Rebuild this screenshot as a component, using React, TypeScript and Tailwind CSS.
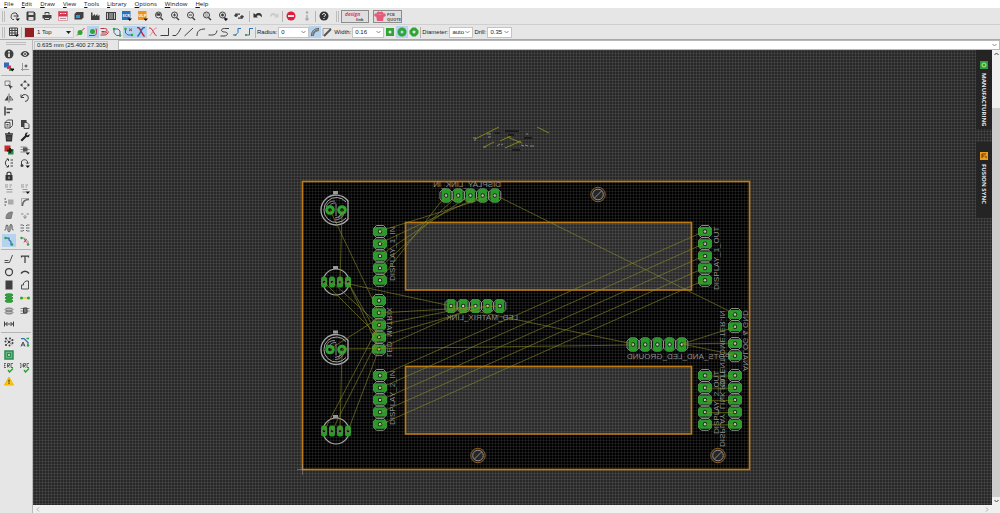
import type { ReactNode } from "react"
import { clsx } from "clsx"

const DARK = "#404040"
const GREEN = "#2fa535"
const BLUE = "#2a6fb5"

const menus = ["File", "Edit", "Draw", "View", "Tools", "Library", "Options", "Window", "Help"]

const lens = (inner: ReactNode) => (
  <>
    <circle cx="9" cy="8" r="6" />
    <path d="M13 13l5 5" strokeWidth="3" />
    {inner}
  </>
)

const drop = <path d="M11 15h9l-4.500 5z" fill="#111" stroke="none" />

const badge = (color: string, text: string) => (
  <>
    <rect x="0" y="0" width="17" height="18" fill={color} stroke="none" />
    <text x="8.5" y="11" fontSize="8" fontWeight="bold" textAnchor="middle" fill="#fff" stroke="none">
      {text}
    </text>
    {drop}
  </>
)

// every glyph is drawn on a 20 x 20 grid
const glyphs: Record<string, ReactNode> = {
  open: (
    <>
      <path d="M8 17H5c-5-3-3-13 3-13h4l3 3M7 10h9M13 7l4 3-4 3" />
      {drop}
    </>
  ),
  save: (
    <>
      <path d="M2 2h14l2 2v14H2z" fill={DARK} />
      <path d="M5 3h10v5H5zM5 12h10v6H5z" fill="#ddd" stroke="none" />
    </>
  ),
  print: (
    <>
      <path d="M1 8h18v7H1z" fill={DARK} stroke="none" />
      <path d="M6 7V3h8v4M5 13h10v4H5z" fill="#ddd" />
    </>
  ),
  cam: (
    <>
      <rect x="1" y="1" width="18" height="18" fill="#eee" stroke="#e08090" strokeWidth="1.500" />
      <rect x="1" y="1" width="18" height="10" fill="#d8344c" stroke="none" />
      <path d="M4 5h3M9 5h2M13 5h3" stroke="#fff" />
      <path d="M4 15h12" stroke="#999" />
    </>
  ),
  board: (
    <>
      <path d="M5 2h14v11l-4 4H1V6z" fill={DARK} stroke="none" />
      <rect x="4" y="8" width="8" height="6" fill="#3597d8" stroke="none" />
    </>
  ),
  factory: <path d="M2 18V3h3v7l5-4v4l5-4v4l4-2v10z" fill={DARK} stroke="none" />,
  library: (
    <>
      <path d="M0 2h20v16H0z" fill={DARK} stroke="none" />
      <path d="M3 4v12M8 4v12M12 4v12M17 4v12" stroke="#c8c8c8" />
    </>
  ),
  scr: badge("#2474bd", "SCR"),
  ulp: badge("#f2921d", "ULP"),
  zoomFit: lens(<path d="M5 8h8M5 6h8" strokeWidth="3" />),
  zoomIn: lens(<path d="M6 8h6M9 5v6" />),
  zoomOut: lens(<path d="M6 8h6" />),
  zoomRedraw: lens(<path d="M6 6h6M6 10h6" stroke="#888" />),
  zoomSelect: (
    <>
      {lens(<path d="M6 8h6M9 5v6" strokeWidth="3" />)}
      {drop}
    </>
  ),
  refresh: <path d="M4 12V6h8M1 10l3-4 3 4M16 8v6H8M13 10l3 4 3-4" strokeWidth="2.500" />,
  undo: <path d="M1 4v9h9L7 10c4-3 8-2 10 3 3-8-5-12-12-6z" fill="#333" stroke="none" />,
  redo: <path d="M19 4v9h-9l3-3c-4-3-8-2-10 3-3-8 5-12 12-6z" fill="#ccc" stroke="none" />,
  stop: (
    <>
      <circle cx="10" cy="10" r="9" fill="#e01b3c" stroke="none" />
      <path d="M4 10h12" stroke="#fff" strokeWidth="3.500" />
    </>
  ),
  go: (
    <g fill="#aaa" stroke="none">
      <circle cx="10" cy="3" r="2.500" />
      <circle cx="10" cy="10" r="2" />
      <circle cx="10" cy="16" r="3.500" />
    </g>
  ),
  help: (
    <>
      <circle cx="10" cy="10" r="9" fill="#333" stroke="none" />
      <path d="M7 8c0-4 6-4 6 0 0 2-3 2-3 4M10 14v2" stroke="#fff" />
    </>
  ),
  grid: (
    <>
      <path d="M1 2h16v15H1zM1 7h16M1 12h16M6 2v15M12 2v15" />
      {drop}
    </>
  ),
  ignore: (
    <>
      <path d="M2 17L17 2" stroke="#d03030" />
      <circle cx="8" cy="11" r="5" fill={GREEN} stroke="none" />
    </>
  ),
  walk: (
    <>
      <path d="M2 17h10c5 0 6-6 4-14" stroke="#b83040" />
      <circle cx="9" cy="9" r="5" fill={GREEN} stroke="none" />
    </>
  ),
  push: <path d="M1 3h8c7 0 7 6 0 6H3M1 16h7c5 0 8-3 9-7M3 12h6c4 0 5-2 5-3" stroke="#b83040" />,
  loop: (
    <>
      <path d="M4 4h8l4 4v9H9l-5-6z" stroke={BLUE} />
      <circle cx="4" cy="4" r="2.500" fill={GREEN} stroke="none" />
      <circle cx="16" cy="17" r="2.500" fill={GREEN} stroke="none" />
    </>
  ),
  loopOff: (
    <>
      <path d="M3 3v9l5 4h8" stroke={BLUE} />
      <circle cx="3" cy="4" r="2.500" fill={GREEN} stroke="none" />
      <circle cx="16" cy="16" r="2.500" fill={GREEN} stroke="none" />
      <path d="M10 3l6 5M16 3l-6 5" stroke="#d03050" />
    </>
  ),
  shove: (
    <>
      <path d="M2 1h3c6 5 6 13 12 18" stroke="#d02040" strokeWidth="3" />
      <path d="M18 1h-3C9 6 9 14 3 19" stroke={BLUE} strokeWidth="3" />
    </>
  ),
  shoveOff: (
    <>
      <path d="M2 2h3c6 5 6 11 12 16" stroke="#d02040" />
      <path d="M18 2h-3C9 7 9 13 3 18" stroke="#e0909c" />
    </>
  ),
  bend0: <path d="M1 17h16V2" />,
  bend1: <path d="M1 17h7l5-6 5-9" />,
  bend2: <path d="M1 18L18 2" />,
  bend3: <path d="M2 18c0-10 5-14 16-14" />,
  bend4: <path d="M1 16h8c5 0 8-3 9-9" />,
  bend5: <path d="M18 3H9c-8 0-8 7 0 7s8 8-1 8H1" />,
  bend6: (
    <>
      <path d="M2 16h5l5-5V3h6" stroke={BLUE} />
      <circle cx="7" cy="16" r="2" fill={GREEN} stroke="none" />
    </>
  ),
  bend7: (
    <>
      <path d="M2 16h9V3h7" stroke={BLUE} />
      <circle cx="4" cy="16" r="2" fill={GREEN} stroke="none" />
    </>
  ),
  miterRound: (
    <>
      <path d="M3 18C3 8 8 3 18 3" stroke="#555" />
      <path d="M6 18C6 11 10 7 18 6" stroke="#777" strokeWidth="4" />
    </>
  ),
  miterFlat: (
    <>
      <path d="M2 18V3h16" stroke="#888" strokeWidth="1.500" />
      <path d="M4 18L18 4" stroke="#555" strokeWidth="4" />
    </>
  ),
  viaSquare: (
    <>
      <rect x="2" y="2" width="16" height="16" fill={GREEN} stroke="none" />
      <circle cx="10" cy="10" r="3" fill="#e6e6e6" stroke="none" />
    </>
  ),
  viaRound: <circle cx="10" cy="10" r="6" stroke={GREEN} strokeWidth="6" />,
  viaOctagon: <path d="M8 4h4l4 4v4l-4 4H8l-4-4V8z" stroke={GREEN} strokeWidth="6" />,
  info: (
    <>
      <circle cx="10" cy="10" r="9" fill={DARK} stroke="none" />
      <path d="M10 4v3M10 9v7" stroke="#fff" strokeWidth="3" />
    </>
  ),
  show: (
    <>
      <path d="M1 10c5-8 13-8 18 0-5 8-13 8-18 0z" fill={DARK} stroke="none" />
      <circle cx="10" cy="10" r="3" stroke="#ddd" />
    </>
  ),
  layers: (
    <g stroke="none">
      <rect x="0" y="1" width="10" height="10" fill={BLUE} />
      <rect x="6" y="7" width="8" height="7" fill="#d83060" />
      <rect x="10" y="13" width="6" height="5" fill={GREEN} />
      <path d="M12 13h9l-4 6z" fill="#111" />
    </g>
  ),
  mark: (
    <>
      <path d="M5 2v16M2 15h16" stroke="#999" />
      <path d="M12 5v6M9 8h6" />
    </>
  ),
  group: (
    <>
      <path d="M2 2h10v9H2z" strokeWidth="1.500" stroke="#666" />
      <path d="M8 8l10 6-4 1-1 4z" fill={DARK} stroke="none" />
    </>
  ),
  move: (
    <g fill={DARK} stroke="none">
      <path d="M10 0l4 5H6zM10 20l4-5H6zM0 10l5-4v8zM20 10l-5-4v8z" />
    </g>
  ),
  mirror: (
    <>
      <path d="M10 1v18" strokeWidth="1.500" />
      <path d="M8 5v10H1z" fill={DARK} stroke="none" />
      <path d="M12 6v8h6z" strokeWidth="1.500" />
    </>
  ),
  rotate: <path d="M3 8a7 7 0 1 1 7 9M2 3v6h6" />,
  align: <path d="M2 1v18M5 6h12M5 13h7" strokeWidth="3" />,
  copy: <path d="M2 7h10v11H2zM2 7l5-5h10v11l-5 5M5 11h4M5 14h4" strokeWidth="1.800" />,
  paste: (
    <>
      <path d="M2 2h11v14H2z" fill={DARK} stroke="none" />
      <path d="M8 7h6l4 4v8H8z" fill="#ddd" strokeWidth="1.800" />
    </>
  ),
  trash: (
    <>
      <path d="M3 6h14l-1 13H4z" fill="#333" stroke="none" />
      <path d="M2 4h16M8 2h4" stroke="#333" strokeWidth="3" />
      <path d="M8 9v7M12 9v7" stroke="#999" strokeWidth="1" />
    </>
  ),
  wrench: <path d="M1 16L10 7c-1-4 2-7 6-6l-3 4 2 2 4-3c1 5-2 7-6 6l-9 9z" fill="#222" stroke="none" />,
  add: (
    <g stroke="none">
      <rect x="1" y="1" width="12" height="12" fill="#c92a2a" />
      <rect x="8" y="8" width="11" height="11" fill="#248a3d" />
      <path d="M6 9h4V6h4v3h3v4h-3v3h-4v-3H6z" fill="#222" />
    </g>
  ),
  replace: (
    <>
      <path d="M1 4h12M1 9h18M1 14h10" stroke="#888" />
      <rect x="6" y="5" width="9" height="8" fill="#555" stroke="none" />
      {drop}
    </>
  ),
  pinswap: <path d="M8 2C1 6 1 14 8 18M5 2h4v4M5 18h4v-4M13 4h5M13 10h5M13 16h5" />,
  gateswap: (
    <>
      <path d="M3 14V8c0-6 12-6 12 0v2M12 9l3 3 3-3" />
      <circle cx="4" cy="15" r="3" fill={DARK} stroke="none" />
      {drop}
    </>
  ),
  lock: (
    <>
      <rect x="3" y="8" width="14" height="11" fill="#333" stroke="none" />
      <path d="M6 9V5c0-4 8-4 8 0v4" strokeWidth="2.500" />
      <path d="M10 11v5" stroke="#ccc" />
    </>
  ),
  name: <path d="M2 2h6M11 2h5M2 6h6M11 6h3M5 11h12M5 16h12" stroke="#999" />,
  value: (
    <>
      <path d="M2 2h6M11 2h5M2 6h6M11 6h3M5 11h10M5 16h6" stroke="#999" />
      {drop}
    </>
  ),
  smash: (
    <>
      <rect x="8" y="5" width="11" height="10" fill="#aaa" stroke="none" />
      <path d="M1 4h3M1 10h5M1 16h3" />
    </>
  ),
  miter: (
    <>
      <path d="M3 18V3h15" stroke="#aaa" />
      <path d="M5 18C5 10 9 5 18 5" stroke="#666" strokeWidth="3" />
    </>
  ),
  split: <path d="M4 17C4 8 8 4 17 4l-3 13z" fill="#888" stroke="#777" />,
  optimize: <path d="M2 8h5M13 8h5M7 13l3 4 3-4M10 10v6" stroke="#888" />,
  meander: <path d="M1 14c3 0 3-1 3-5 0-7 4-7 4 0v5c0 5 4 5 4 0V8c0-7 4-7 4 0 0 4 0 6 3 6" />,
  fanout: <path d="M1 4h5l2 2M1 10h7M1 16h5l2-2M19 4h-5l-2 2M19 10h-7M19 16h-5l-2-2" stroke="#666" />,
  route: (
    <>
      <path d="M3 4h7v4l4 3v6h4" stroke={BLUE} strokeWidth="2.500" />
      <circle cx="3" cy="4" r="2.500" fill={GREEN} stroke="none" />
      <circle cx="16" cy="17" r="2.500" fill={GREEN} stroke="none" />
    </>
  ),
  ripup: (
    <>
      <path d="M3 4h6l7 7v6" stroke="#888" />
      <circle cx="3" cy="4" r="2.500" fill={GREEN} stroke="none" />
      <circle cx="16" cy="17" r="2.500" fill={GREEN} stroke="none" />
      <path d="M8 6l5 7M13 6l-5 7" stroke="#d83050" />
    </>
  ),
  line: <path d="M1 17h10l6-15M1 13h8" strokeWidth="1.800" />,
  text: <path d="M3 4h14M10 4v14M3 3v4M17 3v4" strokeWidth="2.500" />,
  circle: <circle cx="10" cy="10" r="7" strokeWidth="2.500" />,
  arc: <path d="M2 13c4-6 12-6 16 0" strokeWidth="3" />,
  rect: <rect x="3" y="1" width="14" height="18" fill={DARK} stroke="none" />,
  polygon: <path d="M3 18V10h4V6l5-4h5v16z" strokeWidth="1.800" />,
  via: (
    <g fill={GREEN} stroke="#1c7a30" strokeWidth="1">
      <ellipse cx="10" cy="16" rx="8" ry="3" />
      <ellipse cx="10" cy="10" rx="8" ry="3" />
      <ellipse cx="10" cy="4" rx="8" ry="3" />
    </g>
  ),
  signal: (
    <>
      <path d="M3 10h14" stroke="#d6d02a" strokeWidth="3" />
      <circle cx="3" cy="10" r="3" fill={GREEN} stroke="none" />
      <circle cx="17" cy="10" r="3" fill={GREEN} stroke="none" />
    </>
  ),
  hole: (
    <g fill="#bbb" stroke="#777">
      <ellipse cx="10" cy="13" rx="8" ry="3" />
      <ellipse cx="10" cy="7" rx="8" ry="3" />
    </g>
  ),
  attribute: (
    <>
      <path d="M1 5h18M1 10h18M1 15h10" stroke="#888" />
      <path d="M7 4h7v10H7z" fill="#777" />
    </>
  ),
  dimension: <path d="M1 5v10M19 5v10M3 10h14M7 6l-4 4 4 4M13 6l4 4-4 4" />,
  ratsnest: (
    <g fill={DARK} stroke="none">
      <circle cx="4" cy="3" r="2.200" />
      <circle cx="12" cy="3" r="2" />
      <circle cx="17" cy="6" r="2" />
      <circle cx="3" cy="9" r="2" />
      <circle cx="10" cy="10" r="2.400" />
      <circle cx="17" cy="12" r="2" />
      <circle cx="4" cy="16" r="2.200" />
      <circle cx="11" cy="17" r="2" />
      <path d="M10 10L4 3M10 10L4 16M10 10l7-4M10 10l7 6" stroke={DARK} strokeWidth="1" />
    </g>
  ),
  autoroute: (
    <>
      <path d="M2 3h6l8 8v6" stroke={BLUE} strokeWidth="2.500" />
      <path d="M2 19l4-9 4 9M3 16h6" strokeWidth="1.800" />
      <circle cx="16" cy="17" r="2.500" fill={GREEN} stroke="none" />
      <path d="M13 3h5" stroke={GREEN} strokeWidth="3" />
    </>
  ),
  manufacture: (
    <>
      <rect x="2" y="2" width="16" height="16" fill="#69b884" stroke="#2c8b50" strokeWidth="3" />
      <rect x="7" y="7" width="6" height="6" fill="#a8d8b8" stroke="#2c8b50" />
    </>
  ),
  erc: (
    <>
      <path d="M4 1H0v8h4M0 5h3M7 9V1h4v4H7l4 4M18 1h-4v8h4" strokeWidth="1.500" />
      <path d="M8 14l3 4 7-7" stroke={GREEN} strokeWidth="3" />
    </>
  ),
  drc: (
    <>
      <path d="M0 1h2l2 2v4L2 9H0zM7 9V1h4v4H7l4 4M18 1h-4v8h4" strokeWidth="1.500" />
      <path d="M8 14l3 4 7-7" stroke={GREEN} strokeWidth="3" />
    </>
  ),
  warning: (
    <>
      <path d="M10 2l9 16H1z" fill="#f8c818" stroke="#f0b800" />
      <path d="M10 7v6M10 14v2" stroke="#333" />
    </>
  ),
}

function Glyph({ name }: { name: string }) {
  return (
    <svg className="size-[10px] shrink-0" viewBox="0 0 20 20" fill="none" stroke={DARK} strokeWidth="2">
      {glyphs[name]}
    </svg>
  )
}

function ToolButton({ name, active, className }: { name: string; active?: boolean; className?: string }) {
  return (
    <button
      type="button"
      aria-label={name}
      className={clsx("flex shrink-0 items-center justify-center", className, active && "bg-[#b5d3ee]")}
    >
      <Glyph name={name} />
    </button>
  )
}

function Grip() {
  return <span className="mx-[2px] h-[11px] w-[3px] shrink-0 border-x border-[#bdbdbd]" />
}

function Divider() {
  return <span className="h-[11px] w-px shrink-0 bg-[#b4b4b4]" />
}

function Chevron() {
  return (
    <svg className="h-[4px] w-[5px]" viewBox="0 0 10 8" fill="none" stroke="#666" strokeWidth="1.500">
      <path d="M1 2l4 4 4-4" />
    </svg>
  )
}

function Combo({ label, value, width }: { label: string; value: string; width: string }) {
  return (
    <label className="flex shrink-0 items-center">
      <span className="px-px">{label}</span>
      <span className={clsx("relative flex h-[11px] items-center border border-[#c4c4c4] bg-white", width)}>
        <select className="w-full appearance-none pl-[2px] outline-none">
          <option>{value}</option>
        </select>
        <span className="pointer-events-none absolute right-[2px]">
          <Chevron />
        </span>
      </span>
    </label>
  )
}

function MainToolbar() {
  const first = [
    "open", "save", "print", "cam", "board", "factory", "library", "scr",
    "ulp", "zoomFit", "zoomIn", "zoomOut", "zoomRedraw", "zoomSelect", "refresh",
  ]
  return (
    <div className="flex h-[16px] shrink-0 items-center bg-[#e6e6e6]">
      <Grip />
      <div className="flex pr-[2px]">
        {first.map((name) => (
          <ToolButton key={name} name={name} className="h-[14px] w-[16px]" />
        ))}
      </div>
      <Divider />
      <ToolButton name="undo" className="w-[16px]" />
      <ToolButton name="redo" className="w-[16px]" />
      <Divider />
      <ToolButton name="stop" className="w-[16px]" />
      <ToolButton name="go" className="w-[16px]" />
      <Divider />
      <ToolButton name="help" className="w-[16px]" />
      <span className="flex pl-[2px]">
        <Grip />
      </span>
      <button type="button" aria-label="design link" className="h-[13px] w-[28px] shrink-0 border border-[#8c8c8c] bg-[#dedede]">
        <svg className="h-full w-full" viewBox="0 0 26 11">
          <text x="3" y="5" fontSize="5" fontWeight="bold" fontStyle="italic" fill="#e63a5c">
            design
          </text>
          <text x="14" y="10" fontSize="4" fontWeight="bold" fill="#444">
            link
          </text>
        </svg>
      </button>
      <button type="button" aria-label="PCB quote" className="ml-[4px] h-[13px] w-[29px] shrink-0 border border-[#8c8c8c] bg-[#dedede]">
        <svg className="h-full w-full" viewBox="0 0 27 11">
          <path d="M2 4h8l-1 6H3z" fill="#e65a78" />
          <g fill="#e65a78">
            <circle cx="2" cy="4" r="1.800" />
            <circle cx="4.500" cy="2.300" r="1.800" />
            <circle cx="7.500" cy="2.300" r="1.800" />
            <circle cx="10" cy="4" r="1.800" />
          </g>
          <g fontSize="4" fontWeight="bold" fill="#555">
            <text x="13" y="4.500">PCB</text>
            <text x="13" y="9.500">QUOTE</text>
          </g>
        </svg>
      </button>
    </div>
  )
}

function RouteToolbar() {
  const tools = [
    "ignore", "walk", "push", "loop", "loopOff", "shove", "shoveOff",
    "bend0", "bend1", "bend2", "bend3", "bend4", "bend5", "bend6", "bend7",
  ]
  const active = ["walk", "loopOff", "shove"]
  return (
    <div className="flex h-[15px] shrink-0 items-center border-t border-[#cfcfcf] bg-[#e6e6e6] font-['Liberation_Sans',Arial,sans-serif]">
      <Grip />
      <ToolButton name="grid" className="w-[14px]" />
      <Divider />
      <label className="ml-[2px] flex h-[11px] w-[50px] shrink-0 items-center gap-[3px] border border-[#cfcfcf] bg-[#ececec]">
        <span className="h-[9px] w-[9px] shrink-0 bg-[#922020]" />
        <select aria-label="Layer" className="min-w-0 flex-1 appearance-none outline-none">
          <option>1 Top</option>
        </select>
        <svg className="mr-[2px] h-[3px] w-[5px]" viewBox="0 0 10 6">
          <path d="M0 0h10L5 6z" fill="#222" />
        </svg>
      </label>
      <span className="w-px" />
      {tools.map((name) => (
        <ToolButton key={name} name={name} active={active.includes(name)} className="h-[12px] w-[12px]" />
      ))}
      <Divider />
      <Combo label="Radius:" value="0" width="w-[31px]" />
      <ToolButton name="miterRound" active className="h-[12px] w-[12px]" />
      <ToolButton name="miterFlat" className="h-[12px] w-[12px]" />
      <Combo label="Width:" value="0.16" width="w-[32px]" />
      <ToolButton name="viaSquare" className="h-[12px] w-[12px]" />
      <ToolButton name="viaRound" active className="h-[12px] w-[12px]" />
      <ToolButton name="viaOctagon" className="h-[12px] w-[12px]" />
      <Divider />
      <Combo label="Diameter:" value="auto" width="w-[24px]" />
      <Combo label="Drill:" value="0.35" width="w-[25px]" />
    </div>
  )
}

const palette: string[][][] = [
  [["info", "show"], ["layers", "mark"]],
  [
    ["group", "move"], ["mirror", "rotate"], ["align"], ["copy", "paste"], ["trash", "wrench"],
    ["add", "replace"], ["pinswap", "gateswap"], ["lock"], ["name", "value"], ["smash", "miter"],
    ["split", "optimize"], ["meander", "fanout"], ["route", "ripup"],
  ],
  [["line", "text"], ["circle", "arc"], ["rect", "polygon"], ["via", "signal"], ["hole", "attribute"], ["dimension"]],
  [["ratsnest", "autoroute"], ["manufacture"], ["erc", "drc"], ["warning"]],
]

function Palette() {
  return (
    <aside className="w-[33px] shrink-0 border-r border-[#b8b8b8] bg-[#e6e6e6] px-px pt-[2px]">
      <div className="mx-auto mb-[2px] h-[3px] w-[20px] border-y border-[#bdbdbd]" />
      {palette.map((section, i) => (
        <div key={i} className={clsx("px-px", i > 0 && "mt-[2px] border-t border-[#b4b4b4] pt-[2px]")}>
          {section.map((row) => (
            <div key={row[0]} className="flex gap-[2px]">
              {row.map((name) => (
                <ToolButton key={name} name={name} active={name === "route"} className="h-[13px] w-[14px]" />
              ))}
            </div>
          ))}
        </div>
      ))}
    </aside>
  )
}

type Point = [number, number]

const steps = [0, 12.2, 24.4, 36.6, 48.8]

function Pad({ x, y, tall }: { x: number; y: number; tall?: boolean }) {
  return (
    <g transform={`translate(${x} ${y})${tall ? " rotate(90)" : ""}`}>
      <path d="M-3.500 -6h7l3 3v6l-3 3h-7l-3-3v-6z" fill="none" stroke="#9a9a9a" strokeWidth="0.900" />
      <rect x="-7" y="-4.500" width="14" height="9" rx="3.500" fill="#2a9a2a" />
      <circle r="2.200" fill="#1b2b1b" />
      <circle r="1.200" fill="#c8c8c8" />
    </g>
  )
}

function Header({ x, y, row, count = 5 }: { x: number; y: number; row?: boolean; count?: number }) {
  return (
    <>
      {steps.slice(0, count).map((s) => (
        <Pad key={s} x={row ? x + s : x} y={row ? y : y + s} tall={row} />
      ))}
    </>
  )
}

function Led({ y }: { y: number }) {
  return (
    <g transform={`translate(335 ${y})`} fill="none" stroke="#a8a8a8">
      <path d="M13 -9A15 15 0 1 0 13 9z" strokeWidth="1.300" />
      <path d="M11 -8A12.500 12.500 0 1 0 11 8" />
      <path d="M-9 -3a9 9 0 0 1 9-6M9 3a9 9 0 0 1-9 7M-6 -3a7 7 0 0 1 7-4M6 4a7 7 0 0 1-6 4M1 -6v12M3 8l6-5" strokeWidth="0.800" />
      <rect x="-2" y="-19" width="5" height="3" fill="#999" stroke="none" />
      <circle cx="-5" cy="0" r="3.300" stroke="#2fa52f" strokeWidth="3" />
      <circle cx="7" cy="0" r="3.300" stroke="#2fa52f" strokeWidth="3" />
    </g>
  )
}

function RgbLed({ y }: { y: number }) {
  return (
    <g transform={`translate(336 ${y})`}>
      <circle r="13" fill="none" stroke="#a8a8a8" strokeWidth="1.200" />
      <rect x="-3" y="-16" width="5" height="3" fill="#999" />
      {[-12, -4, 4, 12].map((x) => (
        <g key={x}>
          <rect x={x - 3} y="-5.500" width="6" height="11" rx="2.500" fill="#2a9a2a" />
          <circle cx={x} r="1.800" fill="#102010" stroke="#999" strokeWidth="0.500" />
        </g>
      ))}
    </g>
  )
}

function MountHole({ x, y }: { x: number; y: number }) {
  return (
    <g transform={`translate(${x} ${y})`} fill="#262626">
      <circle r="7.300" stroke="#8a5a1c" />
      <circle r="5.300" stroke="#8c8c8c" />
      <path d="M-3.500 3.500l7-7" stroke="#8c8c8c" />
    </g>
  )
}

const airwires: [Point, Point][] = [
  ...steps.map((s): [Point, Point] => [[380, 231 + s], [495 - s, 195]]),
  ...steps.map((s): [Point, Point] => [[380, 376 + s], [705, 231 + s]]),
  ...steps.map((s): [Point, Point] => [[705, 376 + s], [735, 376 + s]]),
  [[495, 195], [735, 314]],
  [[330, 210], [379, 313]],
  [[342, 210], [340, 282]],
  [[348, 282], [379, 349]],
  [[348, 282], [379, 337]],
  [[324, 282], [379, 337]],
  [[332, 282], [379, 325]],
  [[340, 282], [451, 306]],
  [[379, 313], [500, 306]],
  [[379, 325], [475, 306]],
  [[379, 337], [487, 306]],
  [[379, 349], [475, 306]],
  [[451, 306], [633, 344]],
  [[342, 349], [633, 345]],
  [[330, 349], [379, 318]],
  [[342, 349], [340, 431]],
  [[324, 431], [379, 325]],
  [[332, 431], [379, 337]],
  [[348, 431], [379, 349]],
  [[682, 344], [735, 327]],
  [[682, 344], [735, 343]],
  [[682, 344], [735, 355]],
]

// rot turns the label to read upwards, flip shows it as seen from the bottom layer
const labels: { text: string; x: number; y: number; rot?: boolean; flip?: boolean; end?: boolean }[] = [
  { text: "DISPLAY_1_IN", x: 395, y: 281, rot: true },
  { text: "DISPLAY_2_IN", x: 395, y: 425, rot: true },
  { text: "DISPLAY_1_OUT", x: 719, y: 290, rot: true },
  { text: "DISPLAY_2_OUT", x: 719, y: 434, rot: true },
  { text: "LED_MATRIX", x: 387, y: 357, rot: true, flip: true },
  { text: "DISPLAY_LINK_OUT", x: 720, y: 447, rot: true, flip: true },
  { text: "POTENTIOMETER-IN", x: 720, y: 390, rot: true, flip: true },
  { text: "ANALOG & GND", x: 743, y: 371, rot: true, flip: true },
  { text: "DISPLAY_LINK_IN", x: 501, y: 187, flip: true },
  { text: "LED_MATRIX_LINK", x: 518, y: 320, flip: true },
  { text: "POTS_AND_LED_GROUND", x: 627, y: 359, flip: true, end: true },
]

function BoardView() {
  return (
    <svg className="block h-full w-full bg-[#282828]" role="img" aria-label="Board layout">
      <defs>
        <pattern id="grid" width="3" height="3" patternUnits="userSpaceOnUse">
          <path d="M0 0.500h3M0.500 0v3" stroke="#fff" strokeOpacity="0.080" />
        </pattern>
      </defs>
      <g transform="translate(-33 -50)">
        <rect x="302.500" y="181.500" width="447" height="288" fill="#000" />
        <rect x="405.500" y="222.500" width="286" height="67.500" fill="#2b2b2b" />
        <rect x="405.500" y="366.500" width="286" height="67.500" fill="#2b2b2b" />
      </g>
      <rect width="100%" height="100%" fill="url(#grid)" />
      <g transform="translate(-33 -50)">
        <g fill="none" stroke="#bf7a12" strokeWidth="1.600">
          <rect x="302.500" y="181.500" width="447" height="288" />
          <rect x="405.500" y="222.500" width="286" height="67.500" />
          <rect x="405.500" y="366.500" width="286" height="67.500" />
        </g>
        <path d="M297 469.500h11M302.500 464v11" stroke="#999" strokeWidth="0.500" />
        <MountHole x={598} y={194.5} />
        <MountHole x={478} y={455.5} />
        <MountHole x={718} y={455.5} />
        <Led y={210} />
        <Led y={349.5} />
        <RgbLed y={282} />
        <RgbLed y={431} />
        <Header x={446} y={195.5} row />
        <Header x={451} y={306} row />
        <Header x={633} y={344.5} row />
        <Header x={380} y={231.5} />
        <Header x={379} y={300.5} />
        <Header x={380} y={375.5} />
        <Header x={705} y={231.5} />
        <Header x={705} y={375.5} />
        <Header x={735} y={375.5} />
        <Header x={735} y={314.5} count={2} />
        <Header x={735} y={343.5} count={2} />
        <g fill="#8e8e8e" fontFamily='"Liberation Sans", Arial, sans-serif' fontSize="8">
          {labels.map(({ text, x, y, rot, flip, end }) => (
            <text
              key={text}
              textAnchor={end ? "end" : "start"}
              transform={`translate(${x} ${y})${rot ? " rotate(-90)" : ""}${flip ? (rot ? " scale(1 -1)" : " scale(-1 1)") : ""}`}
            >
              {text}
            </text>
          ))}
        </g>
        <g stroke="#8c8c28" strokeOpacity="0.750" strokeWidth="0.800">
          {airwires.map(([a, b], i) => (
            <line key={i} x1={a[0]} y1={a[1]} x2={b[0]} y2={b[1]} />
          ))}
        </g>
        {/* parts not placed on the board yet */}
        <path
          d="M475 139l24-12M484 147l10-5M500 141l13-6M507 137l15 6M505 148l16-7M537 127l12 6"
          stroke="#8c8c20"
          strokeWidth="0.900"
        />
        <path
          d="M473 138h3M475 139v2M487 134h4M488 137h3M483 147h3M497 146l3-2M501 145l2-1M521 145l3 1M525 145l3 1M530 146h4M526 134h2"
          stroke="#858585"
        />
        <path d="M495 133h5M512 150h8M505 131h14M508 135h6M524 138h8" stroke="#1c1c1c" strokeWidth="2" />
      </g>
    </svg>
  )
}

function SideTab({ label, color, className }: { label: string; color: string; className: string }) {
  return (
    <button
      type="button"
      className={clsx("flex w-[16px] flex-col items-center gap-[4px] bg-[#242424] text-[#e4e4e4]", className)}
    >
      <svg className="size-[8px] shrink-0" viewBox="0 0 16 16">
        <rect width="16" height="16" fill={color} />
        {label === "MANUFACTURING" ? (
          <circle cx="8" cy="8" r="4" fill="none" stroke="#c8f060" strokeWidth="2" />
        ) : (
          <path d="M4 12V4h8M4 8h5M12 8v4" fill="none" stroke="#5a3a08" strokeWidth="2" />
        )}
      </svg>
      <span className="text-[6px] leading-[8px] font-bold whitespace-nowrap [writing-mode:vertical-rl]">{label}</span>
    </button>
  )
}

export default function App() {
  return (
    <div className="flex h-screen flex-col overflow-hidden bg-[#e6e6e6] font-['Open_Sans',sans-serif] text-[6px] leading-[8px] text-[#222]">
      <nav className="flex h-[8px] shrink-0 gap-[8px] bg-white pl-[4px] text-[#111]">
        {menus.map((menu) => (
          <button key={menu} type="button" className="leading-[7px]">
            <span className="underline">{menu[0]}</span>
            {menu.slice(1)}
          </button>
        ))}
      </nav>
      <MainToolbar />
      <RouteToolbar />
      <div className="flex min-h-0 flex-1 border-t border-[#a8a8a8]">
        <Palette />
        <main className="flex min-w-0 flex-1 flex-col">
          <div className="flex h-[10px] shrink-0 items-center">
            <output className="mx-px h-[9px] w-[74px] border border-[#c4c4c4] pl-[2px] font-['Liberation_Sans',Arial,sans-serif] leading-[7px] whitespace-nowrap">
              0.635 mm (25.400 27.305)
            </output>
            <div className="ml-[9px] flex h-full flex-1 items-center border border-[#b8b8b8] bg-white pr-[2px]">
              <input aria-label="Command" className="h-full min-w-0 flex-1 px-1 outline-none" />
              <Chevron />
            </div>
          </div>
          <div className="flex min-h-0 flex-1">
            <div className="relative min-w-0 flex-1">
              <BoardView />
              <div className="absolute top-0 right-0 flex flex-col gap-[13px]">
                <SideTab label="MANUFACTURING" color="#2f9a48" className="h-[79px] pt-[11px]" />
                <SideTab label="FUSION SYNC" color="#f09a1c" className="h-[76px] pt-[10px]" />
              </div>
            </div>
            <div className="flex w-[8px] shrink-0 flex-col items-center bg-[#f0f0f0]">
              <svg className="my-[2px] h-[4px] w-[5px]" viewBox="0 0 10 8" fill="none" stroke="#444" strokeWidth="2">
                <path d="M1 6l4-4 4 4" />
              </svg>
              <div className="mt-[50px] w-full flex-1 bg-[#cdcdcd]" />
              <svg className="my-[2px] h-[4px] w-[5px]" viewBox="0 0 10 8" fill="none" stroke="#444" strokeWidth="2">
                <path d="M1 2l4 4 4-4" />
              </svg>
            </div>
          </div>
          <div className="flex h-[8px] shrink-0 items-center justify-between bg-[#f0f0f0] pr-[11px] pl-[3px]">
            <svg className="h-[5px] w-[4px]" viewBox="0 0 8 10" fill="none" stroke="#aaa" strokeWidth="2">
              <path d="M6 1L2 5l4 4" />
            </svg>
            <svg className="h-[5px] w-[4px]" viewBox="0 0 8 10" fill="none" stroke="#aaa" strokeWidth="2">
              <path d="M2 1l4 4-4 4" />
            </svg>
          </div>
        </main>
      </div>
    </div>
  )
}
